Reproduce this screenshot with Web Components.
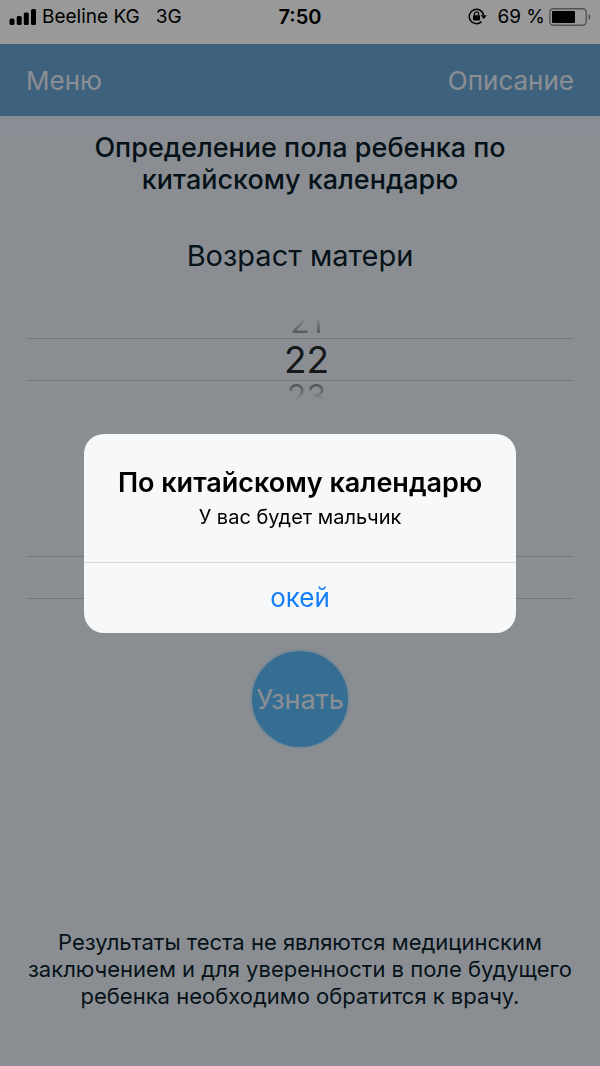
<!DOCTYPE html>
<html lang="ru">
<head>
<meta charset="utf-8">
<meta name="viewport" content="width=device-width, initial-scale=1">
<title>Определение пола ребенка</title>
<style>
  body {
    margin: 0;
    font-family: Inter, "Liberation Sans", sans-serif;
    color: #0a1e2c;
  }
</style>
</head>
<body>
<app-shell>
  <status-bar slot="top" carrier="Beeline KG" network="3G" time="7:50" battery="69"></status-bar>
  <nav-bar slot="top">
    <a slot="left" href="#menu">Меню</a>
    <a slot="right" href="#about">Описание</a>
  </nav-bar>

  <page-heading>
    Определение пола ребенка по китайскому календарю
    <span slot="sub">Возраст матери</span>
  </page-heading>
  <wheel-picker label="Возраст матери" prev="21" value="22" next="23"></wheel-picker>
  <wheel-picker label="Месяц"></wheel-picker>
  <round-button>Узнать</round-button>
  <foot-note slot="bottom">Результаты теста не являются медицинским заключением и для уверенности в поле будущего ребенка необходимо обратится к врачу.</foot-note>

  <alert-dialog slot="overlay">
    <span slot="title">По китайскому календарю</span>
    У вас будет мальчик
    <span slot="action">окей</span>
  </alert-dialog>
</app-shell>

<script>
function define (name, html, setup) {
  const $template = document.createElement('template')
  $template.innerHTML = html

  customElements.define(name, class extends HTMLElement {
    constructor () {
      super()
      const shadow = this.attachShadow({ mode: 'open' })
      shadow.appendChild($template.content.cloneNode(true))
      if (setup) setup(this, shadow)
    }
  })
}

// Copies attributes of the host into elements marked with data-text
function fillText ($host, shadow) {
  shadow.querySelectorAll('[data-text]').forEach($el => {
    $el.textContent = $host.getAttribute($el.dataset.text) || ''
  })
}

define('app-shell', `
<style>
  :host {
    display: flex;
    flex-direction: column;
    min-height: 100vh;
    background: #e7edf5;
  }
  main {
    flex: 1;
    display: flex;
    flex-direction: column;
    align-items: stretch;
    padding: 16px 26px 0;
    background: linear-gradient(#e3ebfa, #e7edf5 24px);
  }
</style>
<slot name="top"></slot>
<main><slot></slot></main>
<slot name="bottom"></slot>
<slot name="overlay"></slot>
`)

define('status-bar', `
<style>
  :host {
    display: grid;
    grid-template-columns: 1fr auto 1fr;
    align-items: center;
    height: 33px;
    padding: 0 9px 11px;
    background: #fff;
    color: #000;
    font-size: 19px;
  }
  div { display: flex; align-items: center; }
  .signal { margin-right: 6px; }
  .network { margin-left: 16px; }
  .time { font-size: 20px; font-weight: 600; }
  .right { justify-content: flex-end; }
  .lock { margin-right: 10px; }
  .battery { margin-left: 4px; }
</style>
<div>
  <svg class="signal" width="27" height="16" viewBox="0 0 27 16" aria-hidden="true">
    <rect x=".5" y="9.5" width="5" height="6.5" rx="1.5"/>
    <rect x="7.7" y="7" width="5" height="9" rx="1.5"/>
    <rect x="14.8" y="3.5" width="5" height="12.5" rx="1.5"/>
    <rect x="22" y="0" width="5" height="16" rx="1.5"/>
  </svg>
  <span data-text="carrier"></span>
  <span class="network" data-text="network"></span>
</div>
<div class="time" data-text="time"></div>
<div class="right">
  <svg class="lock" width="19" height="17" viewBox="0 0 19 17" fill="none" stroke="#000" stroke-width="1.5" aria-hidden="true">
    <path d="M13.5 13.6A7.2 7.2 0 1 1 15.6 7.4"/>
    <path d="M12.6 7.2h6.2l-3 3.8z" fill="#000" stroke="none"/>
    <rect x="5" y="7.2" width="7" height="5.2" rx=".8" fill="#000" stroke="none"/>
    <path d="M6.4 7.4V6a2.1 2.1 0 0 1 4.2 0v1.4" stroke-width="1.3"/>
  </svg>
  <span><span data-text="battery"></span> %</span>
  <svg class="battery" width="42" height="18" viewBox="0 0 42 18" aria-hidden="true">
    <rect x=".8" y=".8" width="36.4" height="16.4" rx="3.5" fill="none" stroke="#8c8c8c" stroke-width="1.4"/>
    <rect x="3" y="3" width="23" height="12" rx="1"/>
    <path d="M39.5 6c2.6 1 2.6 5 0 6z" fill="#8c8c8c"/>
  </svg>
</div>
`, fillText)

define('nav-bar', `
<style>
  :host {
    display: flex;
    justify-content: space-between;
    align-items: center;
    height: 72px;
    padding: 0 26px;
    background: #68a2d0;
    font-size: 26px;
  }
  ::slotted(a) {
    color: #e7edf5;
    text-decoration: none;
  }
</style>
<slot name="left"></slot>
<slot name="right"></slot>
`)

define('page-heading', `
<style>
  :host {
    display: block;
    text-align: center;
  }
  h1, h2 { margin: 0 auto; }
  h1 {
    max-width: 440px;
    font-size: 27px;
    line-height: 32px;
    font-weight: 500;
  }
  h2 {
    margin-top: 42px;
    font-size: 29px;
    line-height: 36px;
    font-weight: 400;
  }
</style>
<h1><slot></slot></h1>
<h2><slot name="sub"></slot></h2>
`)

define('wheel-picker', `
<style>
  :host {
    display: block;
    padding: 44px 0 135px;
  }
  :host(:last-of-type) { padding: 0 0 30px; }
  .wheel {
    display: flex;
    flex-direction: column;
    text-align: center;
    color: #252a2e;
  }
  .side, .value { padding-left: 13px; }
  .side {
    display: flex;
    justify-content: center;
    height: 20px;
    overflow: hidden;
    font-size: 32px;
    line-height: 32px;
    opacity: .6;
  }
  .prev {
    align-items: flex-end;
    -webkit-mask-image: linear-gradient(transparent, #000);
    mask-image: linear-gradient(transparent, #000);
  }
  .next {
    -webkit-mask-image: linear-gradient(#000, transparent);
    mask-image: linear-gradient(#000, transparent);
  }
  .value {
    height: 41px;
    border: solid #c2c8cf;
    border-width: 1px 0;
    font-size: 37px;
    line-height: 42px;
  }
</style>
<div class="wheel" role="spinbutton" tabindex="0">
  <div class="side prev" data-text="prev"></div>
  <div class="value" data-text="value"></div>
  <div class="side next" data-text="next"></div>
</div>
`, ($host, shadow) => {
  fillText($host, shadow)
  const $wheel = shadow.querySelector('.wheel')
  $wheel.setAttribute('aria-label', $host.getAttribute('label'))
  if ($host.hasAttribute('value')) $wheel.setAttribute('aria-valuenow', $host.getAttribute('value'))
})

define('round-button', `
<style>
  :host {
    display: flex;
    justify-content: center;
  }
  button {
    flex: none;
    width: 100px;
    height: 100px;
    padding: 0;
    border: 2px solid #cbe6f8;
    border-radius: 50%;
    background: #5bb8f6;
    color: #e7edf5;
    font: inherit;
    font-size: 27px;
  }
</style>
<button type="button"><slot></slot></button>
`)

define('foot-note', `
<style>
  :host {
    display: block;
    padding: 0 24px 56px;
    text-align: center;
    font-size: 22px;
    line-height: 27px;
  }
  p { margin: 0; }
</style>
<p><slot></slot></p>
`)

define('alert-dialog', `
<style>
  :host {
    position: fixed;
    inset: 0;
    display: flex;
    justify-content: center;
    align-items: center;
    background: rgba(0, 0, 0, .4);
  }
  .box {
    width: 72%;
    max-width: 432px;
    border-radius: 20px;
    overflow: hidden;
    background: #f7f8f9;
    color: #000;
    text-align: center;
  }
  .text { padding: 32px 16px 30px; }
  h2, p { margin: 0; }
  h2 {
    font-size: 27px;
    line-height: 34px;
    font-weight: 600;
  }
  p {
    margin-top: 2px;
    font-size: 20px;
    line-height: 30px;
  }
  button {
    display: block;
    width: 100%;
    height: 71px;
    padding: 0;
    border: 0;
    border-top: 1px solid #d6d8da;
    background: none;
    color: #157efb;
    font: inherit;
    font-size: 26px;
  }
</style>
<div class="box" role="alertdialog" aria-modal="true" aria-labelledby="title" aria-describedby="message">
  <div class="text">
    <h2 id="title"><slot name="title"></slot></h2>
    <p id="message"><slot></slot></p>
  </div>
  <button type="button"><slot name="action"></slot></button>
</div>
`)
</script>
</body>
</html>
